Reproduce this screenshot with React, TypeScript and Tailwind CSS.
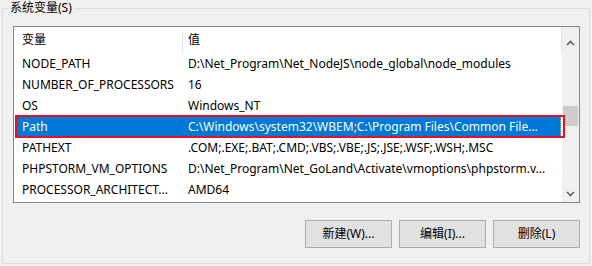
import React from "react";

const rows: [string, string][] = [
  ["NODE_PATH", "D:\\Net_Program\\Net_NodeJS\\node_global\\node_modules"],
  ["NUMBER_OF_PROCESSORS", "16"],
  ["OS", "Windows_NT"],
  ["Path", "C:\\Windows\\system32\\WBEM;C:\\Program Files\\Common File..."],
  ["PATHEXT", ".COM;.EXE;.BAT;.CMD;.VBS;.VBE;.JS;.JSE;.WSF;.WSH;.MSC"],
  ["PHPSTORM_VM_OPTIONS", "D:\\Net_Program\\Net_GoLand\\Activate\\vmoptions\\phpstorm.v..."],
  ["PROCESSOR_ARCHITECT...", "AMD64"],
];

function Chevron({ down }: { down?: boolean }) {
  return (
    <svg width="9" height="6" viewBox="0 0 9 6" className={down ? "rotate-180" : ""}>
      <polyline points="1,5 4.5,1.5 8,5" fill="none" stroke="#606060" strokeWidth="1.6" />
    </svg>
  );
}

export default function App() {
  return (
    <div
      className="w-[592px] h-[266px] bg-[#f0f0f0] text-[12px] text-black overflow-hidden"
      style={{ fontFamily: '"Noto Sans", "Noto Sans CJK SC", sans-serif' }}
    >
      <fieldset className="ml-[2px] w-[588px] h-[264px] border border-[#dcdcdc]">
        <legend className="ml-[5px] px-[2px] leading-[16px]">系统变量(S)</legend>

        <div className="ml-[10px] mt-[10px] w-[567px]">
          <div className="relative h-[177px] border border-[#828790] bg-white flex">
            <div className="w-[548px] flex flex-col">
              <div className="h-[26px] flex items-center">
                <div className="w-[168px] pl-[8px] h-full flex items-center">变量</div>
                <div className="w-px h-[22px] mt-[4px] bg-[#e5e5e5]" />
                <div className="flex-1 pl-[5px] h-full flex items-center">值</div>
                <div className="w-px h-[26px] bg-[#e5e5e5]" />
              </div>
              {rows.map(([name, value]) => {
                const selected = name === "Path";
                return (
                  <div
                    key={name}
                    className={
                      "h-[21px] flex items-center whitespace-nowrap " +
                      (selected ? "bg-[#0078d7] text-white border-x border-dotted border-[#f2a35e] ml-[2px] mr-[1px]" : "")
                    }
                  >
                    <div className={(selected ? "w-[165px] pl-[5px]" : "w-[168px] pl-[8px]") + " overflow-hidden"}>{name}</div>
                    <div className="flex-1 pl-[6px] overflow-hidden">{value}</div>
                  </div>
                );
              })}
            </div>
            <div className="w-[17px] bg-[#f0f0f0] flex flex-col items-center">
              <div className="h-[22px] flex items-end justify-center pb-[3px]">
                <Chevron />
              </div>
              <div className="mt-[57px] w-[15px] h-[20px] bg-[#cdcdcd]" />
              <div className="flex-1" />
              <div className="h-[17px] flex items-center justify-center">
                <Chevron down />
              </div>
            </div>
            <div className="absolute left-[1px] top-[88px] w-[550px] h-[23px] border-2 border-[#e81123] pointer-events-none" />
          </div>

          <div className="mt-[17px] flex justify-end gap-[7px]">
            {["新建(W)...", "编辑(I)...", "删除(L)"].map((t) => (
              <button
                key={t}
                className="w-[87px] h-[28px] bg-[#e1e1e1] border border-[#adadad] text-[12px] text-black"
              >
                {t}
              </button>
            ))}
          </div>
        </div>
      </fieldset>
    </div>
  );
}
